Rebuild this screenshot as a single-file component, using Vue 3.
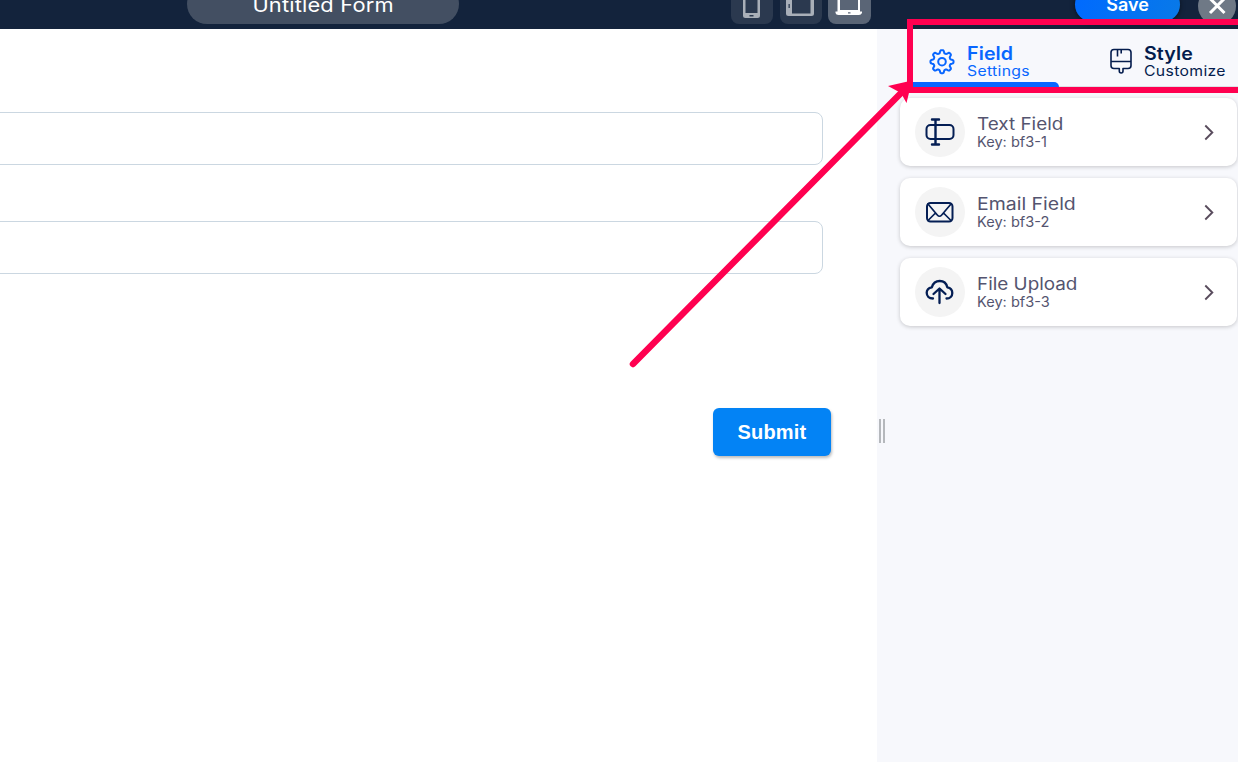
<script setup>
const fields = [
  { icon: 'text', name: 'Text Field', key: 'bf3-1' },
  { icon: 'mail', name: 'Email Field', key: 'bf3-2' },
  { icon: 'upload', name: 'File Upload', key: 'bf3-3' },
]

// Outline of an eight-tooth gear centred on 13,13
const gearPath = Array.from({ length: 128 }, (_, i) => {
  const a = (i / 128) * Math.PI * 2
  const r = 10.1 + 1.5 * Math.tanh(2 * Math.cos(8 * a))
  return `${i ? 'L' : 'M'}${(13 + r * Math.sin(a)).toFixed(2)} ${(12.7 - r * Math.cos(a)).toFixed(2)}`
}).join('') + 'Z'
</script>

<template>
  <div class="page">
    <header class="topbar">
      <div class="title"><span>Untitled Form</span></div>
      <div class="devices">
        <button class="device">
          <svg width="42" height="24" viewBox="0 0 42 24"><path fill="#a9afb8" fill-rule="evenodd" d="M12 0H29V15.500Q29 18 26.500 18H14.500Q12 18 12 15.500ZM14.500 0V13H26.500V0ZM18.500 15h4v1.500h-4z" /></svg>
        </button>
        <button class="device">
          <svg width="42" height="24" viewBox="0 0 42 24"><path fill="#a9afb8" fill-rule="evenodd" d="M6 0H34V13.500Q34 16 31.500 16H8.500Q6 16 6 13.500ZM12 0V13.500H30.500V0ZM8.500 4v4h1.300V4z" /></svg>
        </button>
        <button class="device active">
          <svg width="43" height="24" viewBox="0 0 43 24"><path fill="#fff" fill-rule="evenodd" d="M9.500 0H32V11.500H34V13Q33 15 31 15H10.500Q8 15 7.500 13V11.500H9.500ZM12 0V10H30V0ZM20 12.300v1.200h2.500v-1.200z" /></svg>
        </button>
      </div>
      <button class="save">Save</button>
      <button class="close">
        <svg width="38" height="38" viewBox="0 0 38 38"><path d="M12 11.500L26.500 26M26.500 11.500L12 26" stroke="#fff" stroke-width="3" /></svg>
      </button>
    </header>

    <div class="body">
      <main class="canvas">
        <div class="input"></div>
        <div class="input"></div>
        <button class="submit">Submit</button>
      </main>

      <aside class="panel">
        <div class="grip"></div>
        <nav class="tabs">
          <div class="tab on">
            <svg width="26" height="26" viewBox="0 0 26 26" fill="none" stroke="currentColor" stroke-width="2">
              <path :d="gearPath" stroke-linejoin="round" /><circle cx="13" cy="12.700" r="3.800" />
            </svg>
            <div><b>Field</b><span>Settings</span></div>
          </div>
          <div class="tab style-tab">
            <svg width="24" height="28" viewBox="0 0 24 28" fill="none" stroke="currentColor" stroke-width="1.600">
              <path d="M5 2.500H19Q22 2.500 22 5.500V18.500Q22 21.500 19 21.500H14V24Q14 26 12.200 26Q10.300 26 10.300 24V21.500H5Q2 21.500 2 18.500V5.500Q2 2.500 5 2.500ZM2 14.500H22M8.500 3V9.500M12.200 3V6.500" stroke-linejoin="round" />
            </svg>
            <div><b>Style</b><span>Customize</span></div>
          </div>
        </nav>

        <section class="cards">
          <article v-for="f in fields" :key="f.key" class="card">
            <div class="round">
              <svg width="30" height="30" viewBox="0.5 0 30 30" fill="none" stroke="#041e54" stroke-width="2" stroke-linecap="round" stroke-linejoin="round">
                <template v-if="f.icon === 'text'">
                  <rect x="2" y="8" width="27" height="14" rx="4" />
                  <path d="M11 2.500V27.500M7.500 2.500H14.500M7.500 27.500H14.500" stroke-width="2.400" />
                </template>
                <template v-else-if="f.icon === 'mail'">
                  <rect x="2.500" y="6" width="25.500" height="18.500" rx="3.500" />
                  <path d="M3.500 7L12.800 18Q15 20.500 17.200 18L26.500 7M3.500 23.500L11 16M26.500 23.500L19 16" stroke-width="1.700" />
                </template>
                <template v-else>
                  <path d="M8.500 21.500C4.500 21.500 2.200 19 2.200 15.800C2.200 12.800 4.500 10.800 7.300 10.300C8.500 6.500 11.500 4 15.200 4C19.200 4 22 6.700 22.800 10.300C25.800 10.800 27.800 13 27.800 15.900C27.800 19 25.500 21.500 22 21.500M15 26V12M9 17L15 11.500L21 17" stroke-width="2.300" />
                </template>
              </svg>
            </div>
            <div class="info">
              <div class="name" :class="f.icon">{{ f.name }}</div>
              <div class="key">Key: {{ f.key }}</div>
            </div>
            <svg class="chevron" width="12" height="18" viewBox="0 0 12 18" fill="none" stroke="#594c5d" stroke-width="1.900"><path d="M2.300 2.500L9.300 9.500L2.300 16.500" /></svg>
          </article>
        </section>
      </aside>
    </div>

    <svg class="annotation" width="1238" height="762" viewBox="0 0 1238 762">
      <path d="M1238 22H910V90H1238" fill="none" stroke="#ff0050" stroke-width="6" />
      <path d="M633 364L903 91" stroke="#ff0050" stroke-width="6.500" stroke-linecap="round" />
      <path d="M912 80.500L906.500 103L901 93L888 86Z" fill="#ff0050" />
    </svg>
  </div>
</template>

<style>
body { background: #fff; overflow: hidden; }
</style>

<style scoped>
* { box-sizing: border-box; }
.page { position: relative; width: 1238px; height: 762px; overflow: hidden; font-family: Inter, "Liberation Sans", sans-serif; }
button { border: 0; padding: 0; margin: 0; font-family: inherit; }
svg { display: block; flex: none; }
.topbar { height: 29px; background: #13233c; display: flex; align-items: flex-end; overflow: hidden; padding: 0 2px 5px 187px; }
.title { width: 272px; height: 40px; border-radius: 20px; background: #434f62; color: #fff; font-size: 19.5px; line-height: 42px; text-align: center; flex: none; }
.title span { display: inline-block; transform: scaleX(1.12); letter-spacing: .15px; }
.devices { display: flex; gap: 7px; margin-left: 272px; flex: none; }
.device { width: 42px; height: 42px; background: #2b394f; border-radius: 8px; display: flex; align-items: flex-end; }
.device + .device { margin-left: -.5px; }
.device.active { width: 43px; background: #5a6576; }
.save { width: 105px; height: 35px; margin: 0 18px 2px 204px; border-radius: 18px; background: linear-gradient(100deg, #006aff, #0879e8); color: #fff; font-size: 18px; font-weight: 600; line-height: 35px; flex: none; box-shadow: 0 1px 5px #0008; }
.close { width: 38px; height: 38px; border-radius: 50%; background: #6f7986; flex: none; margin-bottom: -1px; }
.body { display: flex; height: 733px; }
.canvas { width: 877px; padding-top: 83px; }
.input { width: 824px; height: 53px; margin: 0 0 56px -1px; border: 1px solid #cbd7e1; border-radius: 0 8px 8px 0; }
.submit { display: block; width: 118px; height: 48px; margin: 134px 0 0 713px; background: #0383f5; border-radius: 6px; box-shadow: 1px 2px 3px #0004; color: #fff; font: bold 20px/48px "Liberation Sans", Arial, sans-serif; letter-spacing: .2px; }
.panel { position: relative; width: 361px; background: #f7f8fc; padding-left: 23px; }
.grip { position: absolute; left: 2px; top: 390px; width: 6px; height: 24px; border: solid #b5b8bc; border-width: 0 2px; }
.tabs { height: 59px; display: flex; margin-left: 9px; box-shadow: inset 0 -2px #dddfe5; }
.tab { display: flex; align-items: flex-start; color: #041c4d; }
.tab svg { margin-top: 20px; }
.tab.on { width: 150px; height: 59px; padding-left: 20px; color: #0866ff; position: relative; }
.tab.on::after { content: ""; position: absolute; left: 0; right: 0; bottom: 0; height: 6px; background: #0866ff; border-radius: 0 5px 0 0; }
.tab.on > div { margin-left: 12px; }
.style-tab { padding-left: 49.5px; }
.style-tab svg { margin-top: 18px; }
.style-tab > div { margin-left: 11px; }
.tab b, .tab span { display: block; white-space: nowrap; transform-origin: 0 50%; }
.tab b { font-size: 18px; font-weight: 600; line-height: 20px; margin-top: 15px; transform: scaleX(1.09); letter-spacing: .1px; }
.tab span { font-size: 14px; line-height: 16px; margin-top: -1px; letter-spacing: .3px; transform: scaleX(1.125); }
.cards { display: flex; flex-direction: column; gap: 12px; padding-top: 10px; }
.card { width: 337px; height: 68px; display: flex; align-items: center; background: #fff; border-radius: 10px; padding: 0 22px 0 15px; box-shadow: 0 1px 4px #0003; }
.round { width: 50px; height: 50px; border-radius: 50%; background: #f4f4f4; display: grid; place-items: center; }
.info { margin-left: 12px; flex: 1; color: #54546f; white-space: nowrap; }
.name, .key { transform-origin: 0 50%; }
.name { font-size: 17px; line-height: 20px; transform: scaleX(1.11); }
.name.mail { transform: scaleX(1.145); }
.key { font-size: 14px; line-height: 16px; transform: scaleX(1.04); }
.annotation { position: absolute; inset: 0; pointer-events: none; }
</style>
